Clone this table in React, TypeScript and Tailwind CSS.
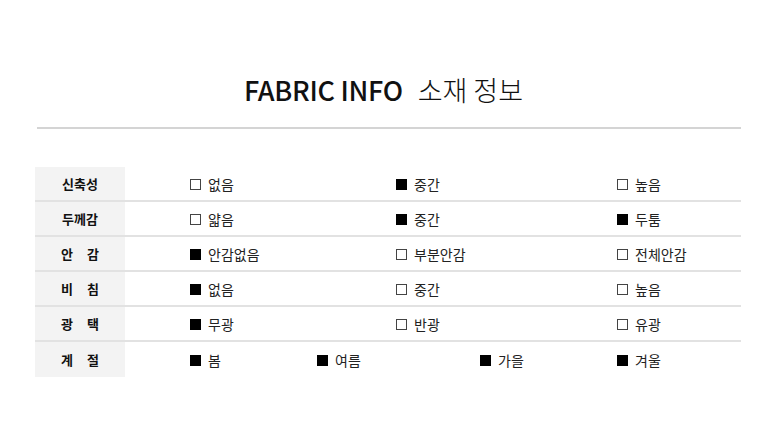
type Opt = { label: string; on: boolean };

const rows: { name: string; opts: Opt[] }[] = [
  { name: '신축성', opts: [{ label: '없음', on: false }, { label: '중간', on: true }, { label: '높음', on: false }] },
  { name: '두께감', opts: [{ label: '얇음', on: false }, { label: '중간', on: true }, { label: '두툼', on: true }] },
  { name: '안 감', opts: [{ label: '안감없음', on: true }, { label: '부분안감', on: false }, { label: '전체안감', on: false }] },
  { name: '비 침', opts: [{ label: '없음', on: true }, { label: '중간', on: false }, { label: '높음', on: false }] },
  { name: '광 택', opts: [{ label: '무광', on: true }, { label: '반광', on: false }, { label: '유광', on: false }] },
];

const seasons: Opt[] = [
  { label: '봄', on: true },
  { label: '여름', on: true },
  { label: '가을', on: true },
  { label: '겨울', on: true },
];

function Check({ opt }: { opt: Opt }) {
  return (
    <span className="flex items-center gap-[7px] whitespace-nowrap">
      {opt.on ? (
        <span className="inline-block w-[11px] h-[11px] bg-black" />
      ) : (
        <span className="inline-block w-[11px] h-[11px] border border-[#444] bg-white" />
      )}
      <span>{opt.label}</span>
    </span>
  );
}

// labels like "안 감" are spread over the width of a three-letter label
function Head({ name }: { name: string }) {
  const parts = name.split(' ');
  return (
    <div className="w-[90px] bg-[#f3f3f3] flex items-center justify-center font-bold text-[13px] text-[#111]">
      {parts.length > 1 ? (
        <div className="w-[38px] flex justify-between">
          {parts.map((p) => (
            <span key={p}>{p}</span>
          ))}
        </div>
      ) : (
        <span>{name}</span>
      )}
    </div>
  );
}

export default function App() {
  return (
    <div
      className="w-[780px] h-[446px] bg-white text-[#222]"
      style={{ fontFamily: '"Noto Sans CJK KR", "Noto Sans", sans-serif' }}
    >
      {/* Title */}
      <div className="pt-[70px] pr-[13px] flex justify-center">
        <h1 className="text-[27px] leading-[40px] text-[#111]">
          <span className="font-medium tracking-[-0.3px]">FABRIC INFO</span>
          <span className="font-light ml-[15px]">소재 정보</span>
        </h1>
      </div>
      <div className="mt-[17px] ml-[37px] w-[704px] h-[2px] bg-[#d4d4d4]" />

      {/* Table */}
      <div className="mt-[38px] ml-[35px] w-[706px] text-[14px]">
        {rows.map((r) => (
          <div key={r.name} className="flex h-[35px] border-b-2 border-[#e2e2e2]">
            <Head name={r.name} />
            <div className="flex items-center pt-[2px]">
              <div className="w-[271px] pl-[65px]">
                <Check opt={r.opts[0]} />
              </div>
              <div className="w-[221px]">
                <Check opt={r.opts[1]} />
              </div>
              <div>
                <Check opt={r.opts[2]} />
              </div>
            </div>
          </div>
        ))}
        <div className="flex h-[35px]">
          <Head name="계 절" />
          <div className="flex items-center pt-[2px]">
            <div className="w-[192px] pl-[65px]">
              <Check opt={seasons[0]} />
            </div>
            <div className="w-[163px]">
              <Check opt={seasons[1]} />
            </div>
            <div className="w-[137px]">
              <Check opt={seasons[2]} />
            </div>
            <div>
              <Check opt={seasons[3]} />
            </div>
          </div>
        </div>
      </div>
    </div>
  );
}
